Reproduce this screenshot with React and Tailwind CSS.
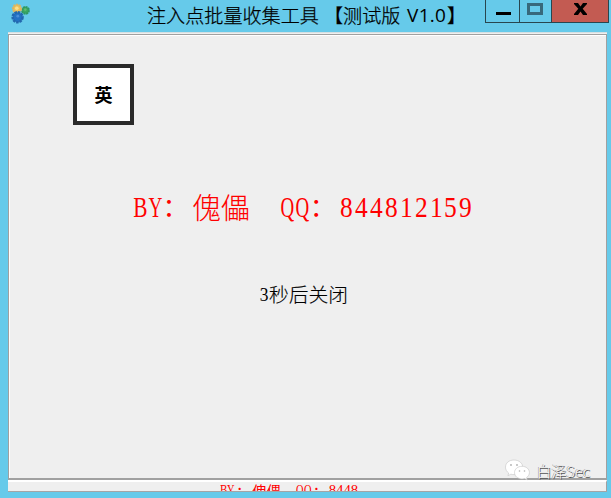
import React from 'react';

const Cell = ({ children, className }) => (
  <span className={'flex shrink-0 justify-center whitespace-pre ' + className}>{children}</span>
);

function Gears() {
  return (
    <svg className="ml-[10px] mt-[3px] shrink-0" width="21" height="21" viewBox="0 0 21 21">
      <circle cx="15.5" cy="7.3" r="3.4" fill="#3aa860" stroke="#2f9763" strokeWidth="2" strokeDasharray="2 .6" />
      <circle cx="15.3" cy="6.6" r="1.3" fill="#5fbd74" />
      <circle cx="7" cy="5.7" r="4" fill="#edc15b" stroke="#d9b565" strokeWidth="2" strokeDasharray="2.2 .7" />
      <circle cx="6.8" cy="5.2" r="1.8" fill="#fbe08c" />
      <circle cx="7.6" cy="14.2" r="5" fill="#2371c4" stroke="#2367ae" strokeWidth="2.4" strokeDasharray="2.5 .8" />
      <circle cx="7.8" cy="13.2" r="1.4" fill="#4a8fd8" />
    </svg>
  );
}

function TitleBar() {
  return (
    <header className="flex h-8 shrink-0 items-start">
      <Gears />
      <h1 className="ml-[116px] flex h-[30px] items-center whitespace-pre text-[19.1px] leading-[30px] text-black [-webkit-text-stroke:0.25px_black] font-['Noto_Sans_CJK_SC',sans-serif] font-light">
        <span className="w-[177px]">注入点批量收集工具</span>
        <span className="w-[77px]">【测试版</span>
        <span className="ml-[6px] w-[41px] font-['Open_Sans',sans-serif] text-[19px] font-normal tracking-[0.3px] [-webkit-text-stroke:0]">V1.0</span>
        <span className="-ml-px">】</span>
      </h1>
      <div className="ml-auto mr-[2px] flex h-[23px] w-[124px] border-x border-b border-[#28464f]">
        <div className="flex w-[34px] justify-center border-r border-[#28464f] pt-3">
          <span className="ml-[2px] h-[3px] w-[15px] bg-black" />
        </div>
        <div className="flex w-[32px] justify-center border-r border-[#28464f] pt-[3px]">
          <span className="mr-px h-3 w-4 border-[3px] border-[#37697c]" />
        </div>
        <div className="flex flex-1 justify-center bg-[#c35b52] pt-[3px]">
          <svg width="13" height="12" viewBox="0 0 13 12">
            <path d="M0 0H4L6.5 3.5L9 0H13V1L8.7 5.8L13 11V12H9L6.5 8.4L4 12H0V11L4.3 5.8L0 1Z" fill="#000" />
          </svg>
        </div>
      </div>
    </header>
  );
}

function Watermark() {
  return (
    <div className="absolute right-[17px] top-[426px] flex items-center">
      <svg width="28" height="24" viewBox="0 0 28 24" fill="#fff" stroke="#c4c4c4" strokeWidth=".6">
        <path d="M10 1C5 1 1.5 4 1.5 8.2c0 2.5 1.2 4.4 3.2 5.8l-.8 2.7 3-1.5c1 .3 2 .4 3.2.4 5 0 8.7-3 8.7-7.2S15 1 10 1Z" />
        <path d="M18 7.3c-4.2 0-7.5 2.7-7.5 6.3s3.3 6.3 7.5 6.3c1 0 1.8-.1 2.7-.4l2.5 1.4-.7-2.3c1.8-1.2 2.9-2.9 2.9-5 0-3.6-3.2-6.3-7.4-6.3Z" />
        <g fill="#b0b0b0" stroke="none">
          <circle cx="7" cy="6" r=".9" /><circle cx="13" cy="6" r=".9" />
          <circle cx="15.5" cy="12" r=".8" /><circle cx="20.5" cy="12" r=".8" />
        </g>
      </svg>
      <span className="ml-[4px] whitespace-nowrap text-[14.8px] leading-6 text-[#f8f8f8] [text-shadow:1px_1px_0_#555,-0.5px_-0.5px_0_#888] font-['Noto_Sans_CJK_SC',sans-serif] font-light">白泽Sec</span>
    </div>
  );
}

export default function App() {
  return (
    <div className="flex h-[498px] w-[611px] flex-col overflow-hidden bg-[#66caea]">
      <TitleBar />
      <main className="relative ml-2 h-[460px] w-[599px] border-b border-t border-b-[#a5a5a5] border-t-[#d4dfe2] bg-[#efefef]">
        <div className="h-px bg-[#efefef]" />
        <section className="flex h-[446px] flex-col border-b-2 border-l border-r border-t border-[#a0a0a0]">
          <div className="flex flex-1 flex-col border-l border-t border-white">
            <div className="ml-[63px] mt-[28px] flex h-[61px] w-[61px] shrink-0 items-center justify-center border-4 border-[#2a2a2a] bg-white text-[18px] font-bold leading-none text-black font-['Noto_Sans_CJK_SC',sans-serif]"><span className="-mt-0.5">英</span></div>
            <div className="ml-[123px] mt-[62px] flex h-10 items-center text-[29.6px] leading-10 text-[#ff0000] font-['Liberation_Serif','Noto_Sans_CJK_SC',serif]">
              <Cell className="w-[14.8px] scale-x-[.72]">B</Cell>
              <Cell className="w-[14.8px] scale-x-[.65]">Y</Cell>
              <Cell className="-mt-1 w-[29.5px] pr-[4px] text-[25px] font-['Noto_Sans_CJK_SC',sans-serif]">：</Cell>
              <Cell className="-mt-0.5 w-[58px] text-[29px] font-light font-['Noto_Sans_CJK_SC',sans-serif]">傀儡</Cell>
              <Cell className="ml-[30px] w-[14.8px] scale-x-[.64]">Q</Cell>
              <Cell className="w-[14.8px] scale-x-[.64]">Q</Cell>
              <Cell className="-mt-1 w-[29.5px] pr-[4px] text-[25px] font-['Noto_Sans_CJK_SC',sans-serif]">：</Cell>
              {'844812159'.split('').map((digit, i) => (
                <Cell key={i} className="w-[14.9px] scale-x-[.86]">{digit}</Cell>
              ))}
            </div>
            <div className="ml-[249px] mt-[52px] flex h-[30px] items-center text-[19.8px] leading-[30px] text-black [-webkit-text-stroke:0.15px_black] font-['Noto_Sans_CJK_SC',sans-serif] font-light">
              <Cell className="w-[10px] scale-x-[.88] font-['Liberation_Serif',serif] font-normal [-webkit-text-stroke:0]">3</Cell>
              <span>秒后关闭</span>
            </div>
          </div>
        </section>
        <footer className="flex h-[11px] items-start overflow-hidden border-r border-t-2 border-r-[#a0a0a0] border-t-white">
          <div className="ml-[212px] flex h-[11px] w-[138px] shrink-0 overflow-hidden text-[14.8px] leading-[17px] text-[#ff0000] font-['Liberation_Serif','Noto_Sans_CJK_SC',serif]">
            <Cell className="w-[7.4px] scale-x-[.75]">B</Cell>
            <Cell className="w-[7.4px] scale-x-[.7]">Y</Cell>
            <Cell className="w-[17px] font-['Noto_Sans_CJK_SC',sans-serif]">：</Cell>
            <Cell className="w-[30px] font-['Noto_Sans_CJK_SC',sans-serif]">傀儡</Cell>
            <Cell className="ml-[14.5px] w-[7.7px] scale-x-[.7]">Q</Cell>
            <Cell className="w-[7.7px] scale-x-[.7]">Q</Cell>
            <Cell className="w-[17px] font-['Noto_Sans_CJK_SC',sans-serif]">：</Cell>
            <span>8448</span>
          </div>
        </footer>
        <Watermark />
      </main>
    </div>
  );
}
